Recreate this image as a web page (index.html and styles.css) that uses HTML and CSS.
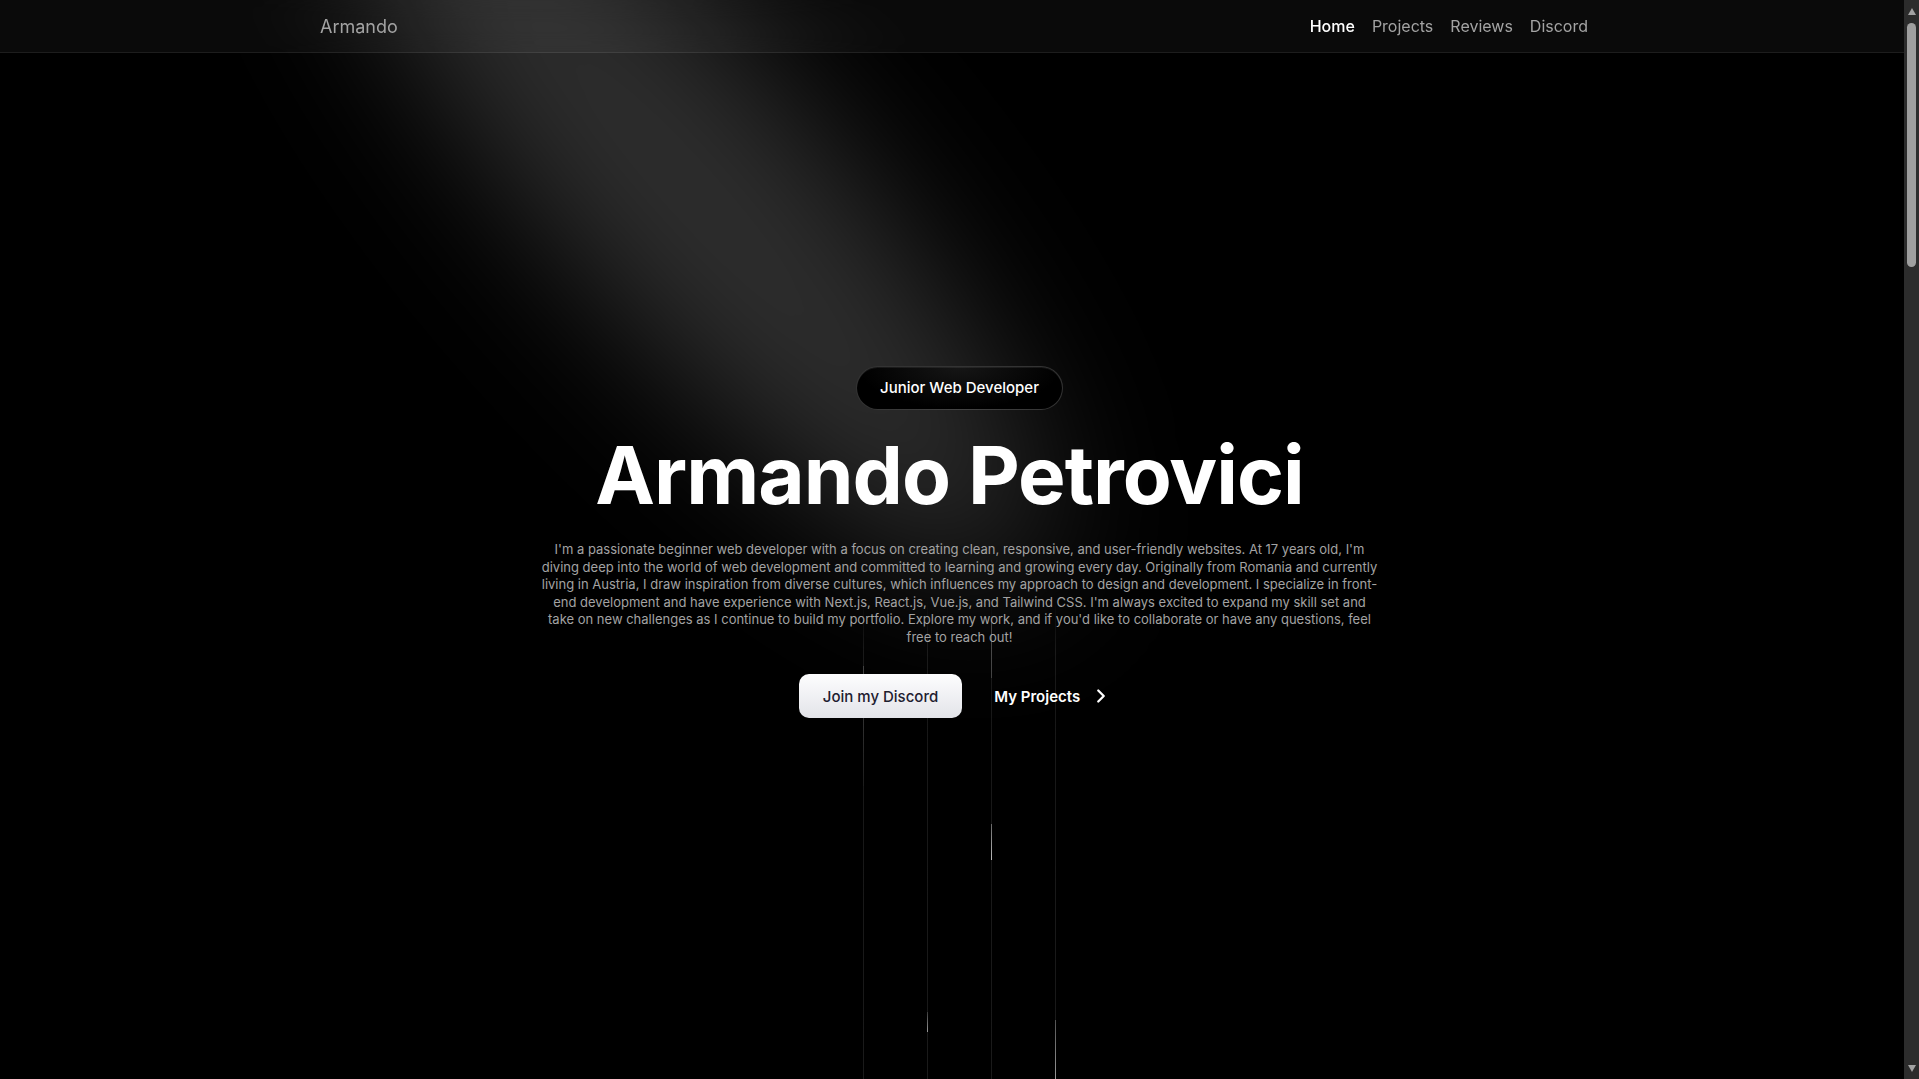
FILE: index.html
```html
<!DOCTYPE html>
<html lang="en">
<head>
<meta charset="utf-8">
<title>Armando Petrovici</title>
<link rel="stylesheet" href="styles.css">
</head>
<body>
<header class="nav">
  <div class="nav-inner">
    <a class="logo" href="#">Armando</a>
    <nav class="links">
      <a class="link active" href="#">Home</a>
      <a class="link" href="#projects">Projects</a>
      <a class="link" href="#reviews">Reviews</a>
      <a class="link" href="#discord">Discord</a>
    </nav>
  </div>
</header>

<div class="scrollbar" aria-hidden="true">
  <span class="sb-arrow sb-up"></span>
  <span class="sb-thumb"></span>
  <span class="sb-arrow sb-down"></span>
</div>

<main>
  <section class="hero">
    <svg class="spotlight" viewBox="0 0 1919 1079" preserveAspectRatio="none" aria-hidden="true">
      <defs>
        <filter id="spot-blur" x="-60%" y="-60%" width="220%" height="220%">
          <feGaussianBlur stdDeviation="75"/>
        </filter>
      </defs>
      <g filter="url(#spot-blur)">
        <ellipse cx="690" cy="190" rx="510" ry="135" transform="rotate(48 690 190)" fill="#ffffff" fill-opacity="0.18"/>
      </g>
    </svg>

    <div class="beams" aria-hidden="true">
      <div class="beam"><span class="glow g1"></span></div>
      <div class="beam"><span class="glow g2"></span></div>
      <div class="beam"><span class="glow g3a"></span><span class="glow g3b"></span></div>
      <div class="beam"><span class="glow g4"></span></div>
    </div>

    <div class="hero-inner">
      <div class="badge">Junior Web Developer</div>
      <h1 class="title">Armando Petrovici</h1>
      <p class="intro">I'm a passionate beginner web developer with a focus on creating clean, responsive, and user-friendly websites. At 17 years old, I'm diving deep into the world of web development and committed to learning and growing every day. Originally from Romania and currently living in Austria, I draw inspiration from diverse cultures, which influences my approach to design and development. I specialize in front-end development and have experience with Next.js, React.js, Vue.js, and Tailwind CSS. I'm always excited to expand my skill set and take on new challenges as I continue to build my portfolio. Explore my work, and if you'd like to collaborate or have any questions, feel free to reach out!</p>
      <div class="actions">
        <a class="btn-primary" href="#discord">Join my Discord</a>
        <a class="btn-ghost" href="#projects">My Projects
          <svg class="chev" viewBox="0 0 24 24" width="22" height="22" aria-hidden="true"><path d="m9 18 6-6-6-6" fill="none" stroke="currentColor" stroke-width="2.5" stroke-linecap="round" stroke-linejoin="round"/></svg>
        </a>
      </div>
    </div>
  </section>

  <section class="more" id="projects"></section>
  <section class="more" id="reviews"></section>
  <section class="more" id="discord"></section>
</main>
</body>
</html>
```

FILE: styles.css
```css
html {
  color-scheme: dark;
  background: #000;
}

* {
  box-sizing: border-box;
}

body {
  margin: 0;
  background: #000;
  color: #fff;
  font-family: Inter, "Noto Sans", "Liberation Sans", sans-serif;
  overflow-x: hidden;
}

a {
  text-decoration: none;
  color: inherit;
}

/* ---------- scrollbar (window chrome) ---------- */
.scrollbar {
  position: fixed;
  top: 0;
  right: 0;
  z-index: 50;
  width: 15px;
  height: 100vh;
  background: #2c2c2c;
  display: flex;
  flex-direction: column;
  align-items: center;
}

.sb-arrow {
  width: 0;
  height: 0;
  border-left: 4.5px solid transparent;
  border-right: 4.5px solid transparent;
}

.sb-up {
  margin-top: 8px;
  border-bottom: 7px solid #a3a3a3;
}

.sb-thumb {
  width: 9px;
  height: 244px;
  margin-top: 8px;
  border-radius: 5px;
  background: #9f9f9f;
}

.sb-down {
  margin-top: auto;
  margin-bottom: 7px;
  border-top: 7px solid #a3a3a3;
}

/* ---------- nav ---------- */
.nav {
  position: fixed;
  top: 0;
  left: 0;
  right: 15px;
  z-index: 20;
  height: 53px;
  background: rgba(255, 255, 255, 0.04);
  backdrop-filter: blur(10px);
  border-bottom: 1px solid rgba(255, 255, 255, 0.08);
}

.nav-inner {
  max-width: 1280px;
  height: 52px;
  margin: 0 auto;
  padding: 0 4px 0 8px;
  display: flex;
  align-items: center;
  justify-content: space-between;
}

.logo {
  font-size: 18px;
  font-weight: 400;
  color: #a3a3a3;
}

.links {
  display: flex;
  gap: 17px;
}

.link {
  font-size: 16px;
  font-weight: 400;
  color: #a3a3a3;
}

.link.active {
  color: #fff;
  font-weight: 500;
}

/* ---------- hero ---------- */
.hero {
  position: relative;
  height: 100vh;
  overflow: hidden;
}

.spotlight {
  position: absolute;
  top: 0;
  left: 0;
  width: 100%;
  height: 100vh;
  z-index: 0;
  pointer-events: none;
}

.beams {
  position: absolute;
  top: 600px;
  bottom: 0;
  left: 0;
  width: 100vw;
  z-index: 1;
  display: flex;
  justify-content: center;
  gap: 63px;
  pointer-events: none;
}

.beam {
  position: relative;
  width: 1px;
  height: 100%;
  background: linear-gradient(to bottom, rgba(255, 255, 255, 0) 0, rgba(255, 255, 255, 0.09) 50px, rgba(255, 255, 255, 0.1) 100%);
}

.glow {
  position: absolute;
  left: 0;
  width: 1px;
}

.g1 {
  top: 66px;
  height: 120px;
  background: linear-gradient(to bottom, rgba(255, 255, 255, 0.18), rgba(255, 255, 255, 0.02));
}

.g2 {
  top: 412px;
  height: 20px;
  background: linear-gradient(to bottom, rgba(255, 255, 255, 0.15), rgba(255, 255, 255, 0.55));
}

.g3a {
  top: 18px;
  height: 60px;
  background: linear-gradient(to bottom, rgba(255, 255, 255, 0.22), rgba(255, 255, 255, 0.18));
}

.g3b {
  top: 224px;
  height: 36px;
  background: linear-gradient(to bottom, rgba(255, 255, 255, 0.35), rgba(255, 255, 255, 0.7));
}

.g4 {
  top: 420px;
  bottom: 0;
  background: linear-gradient(to bottom, rgba(255, 255, 255, 0.25), rgba(255, 255, 255, 0.55));
}

.hero-inner {
  position: relative;
  z-index: 2;
  width: 100vw;
  height: 100vh;
  padding-top: 5px;
  display: flex;
  flex-direction: column;
  align-items: center;
  justify-content: center;
  text-align: center;
}

.badge {
  padding: 9px 23px;
  border-radius: 9999px;
  border: 1px solid rgba(255, 255, 255, 0.2);
  background: radial-gradient(ellipse at 50% 0%, #161616 0%, #000 70%);
  box-shadow: inset 0 1px 0 rgba(255, 255, 255, 0.08);
  font-size: 15px;
  font-weight: 500;
  line-height: 24px;
  color: #fff;
  margin-bottom: 25px;
}

.title {
  margin: 0 0 26px;
  padding-right: 20px;
  font-size: 80px;
  font-weight: 700;
  line-height: 1;
  letter-spacing: -1px;
  color: #fff;
}

.intro {
  margin: 0 0 28px;
  max-width: 840px;
  font-size: 13px;
  line-height: 17.5px;
  color: #a3a3a3;
}

.actions {
  display: flex;
  align-items: center;
  gap: 16px;
  padding-left: 4px;
}

.btn-primary {
  display: inline-flex;
  align-items: center;
  height: 44px;
  padding: 0 24px;
  border-radius: 10px;
  background: linear-gradient(to bottom, #fdfdfe, #e3e4e9);
  color: #1e2030;
  font-size: 15px;
  font-weight: 500;
}

.btn-ghost {
  display: inline-flex;
  align-items: center;
  height: 44px;
  padding: 0 12px 0 16px;
  color: #fff;
  font-size: 15px;
  font-weight: 600;
}

.chev {
  margin-left: 10px;
}

/* ---------- below the fold ---------- */
.more {
  height: 1187px;
}
```
